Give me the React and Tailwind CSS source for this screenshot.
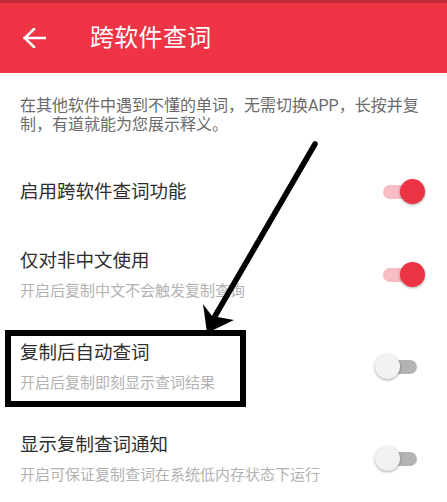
import React from 'react';

const settings = [
  { title: '启用跨软件查词功能', on: true },
  { title: '仅对非中文使用', sub: '开启后复制中文不会触发复制查询', on: true },
  { title: '复制后自动查词', sub: '开启后复制即刻显示查词结果', on: false, boxed: true },
  { title: '显示复制查词通知', sub: '开启可保证复制查词在系统低内存状态下运行', on: false },
];

function Toggle({ on }) {
  return (
    <div className="relative w-[50px] h-[26px] shrink-0">
      <div
        className={`absolute left-[8px] top-[6px] w-[34px] h-[14px] rounded-full ${
          on ? 'bg-[#f8bcc3]' : 'bg-[#b3b3b3]'
        }`}
      />
      <div
        className={`absolute top-0 w-[25px] h-[25px] rounded-full shadow-[0_1px_3px_rgba(0,0,0,0.35)] ${
          on ? 'left-[25px] bg-[#ec3343]' : 'left-0 bg-[#f2f2f2]'
        }`}
      />
    </div>
  );
}

function Row({ item, first }) {
  return (
    <div
      className={`relative flex items-center justify-between pl-5 pr-[22px] ${
        first ? 'h-[74px]' : 'h-[92px]'
      }`}
    >
      <div className="flex flex-col">
        <span className="text-[18.5px] leading-[24px] text-[#2e2e2e]">{item.title}</span>
        {item.sub && (
          <span className="mt-[8px] text-[15px] leading-[20px] text-[#b2b2b2]">{item.sub}</span>
        )}
      </div>
      <Toggle on={item.on} />
      {item.boxed && (
        <div className="absolute left-[5px] top-[9px] w-[241px] h-[77px] border-[6px] border-black" />
      )}
    </div>
  );
}

export default function App() {
  return (
    <div
      className="relative w-[447px] h-[502px] overflow-hidden bg-white"
      style={{ fontFamily: 'Roboto, "Noto Sans CJK SC", sans-serif' }}
    >
      {/* toolbar */}
      <div className="h-[3px] bg-[#c52a39]" />
      <div className="h-[70px] bg-[#ef3446] flex items-center">
        <svg className="ml-[23px]" width="23" height="20" viewBox="0 0 23 20" fill="none">
          <path d="M1.5 10H22M11 1L1.8 10L11 19" stroke="#fff" strokeWidth="2.6" strokeLinecap="square" />
        </svg>
        <span className="ml-[44px] text-[24px] text-white tracking-[0.3px]">跨软件查词</span>
      </div>

      {/* intro */}
      <p className="pl-5 pr-5 pt-[24px] text-[16px] leading-[18.5px] text-[#6a6a6a]">
        在其他软件中遇到不懂的单词，无需切换APP，长按并复制，有道就能为您展示释义。
      </p>

      <div className="mt-[21px]">
        {settings.map((item, i) => (
          <Row key={item.title} item={item} first={i === 0} />
        ))}
      </div>

      {/* annotation arrow */}
      <svg className="absolute inset-0 pointer-events-none" width="447" height="502">
        <line x1="315" y1="144" x2="211" y2="323" stroke="#000" strokeWidth="5.5" strokeLinecap="round" />
        <polygon points="207,333 203,304 212,316 234,320" fill="#000" />
      </svg>
    </div>
  );
}
